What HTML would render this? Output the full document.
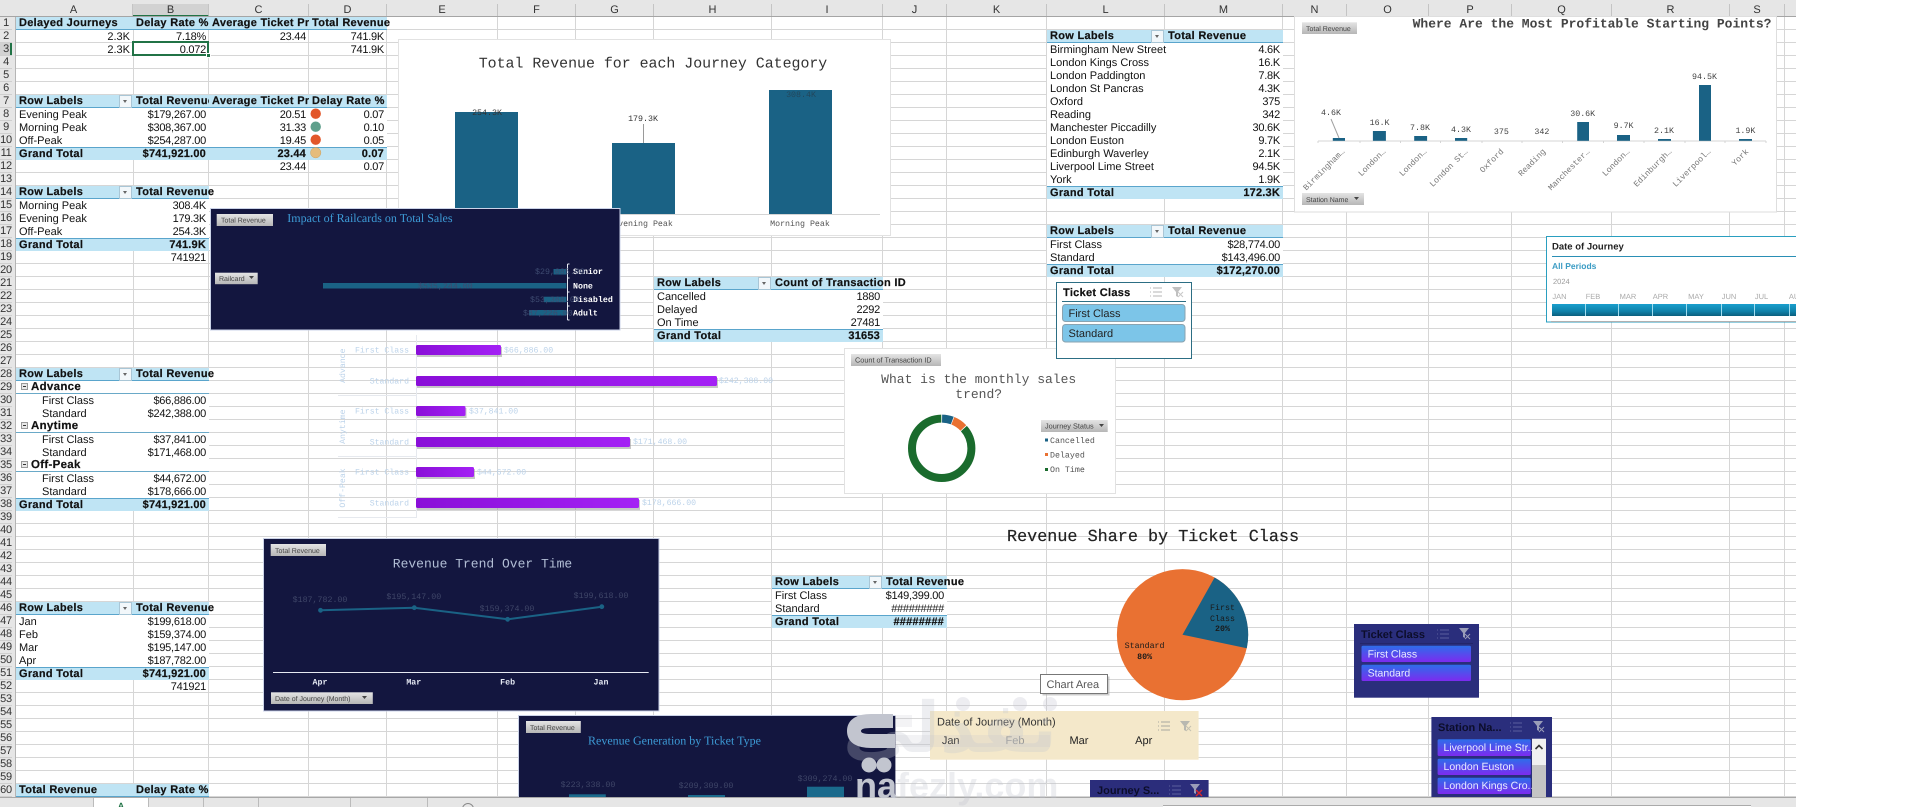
<!DOCTYPE html>
<html><head><meta charset="utf-8"><title>Dashboard</title>
<style>
html,body{margin:0;padding:0;background:#fff}
body{width:1906px;height:807px;position:relative;overflow:hidden;font-family:"Liberation Sans",sans-serif;text-rendering:geometricPrecision}
.abs{position:absolute}
.ch{position:absolute;top:0;left:0;height:17px;width:1796px;background:#e6e6e6;box-sizing:border-box}
.ch i{position:absolute;top:4px;height:13px;font:normal 11px/13px "Liberation Sans",sans-serif;color:#333;text-align:center;border-right:1px solid #c4c4c4;box-sizing:border-box}
.ch:after{content:"";position:absolute;left:0;right:0;top:16px;height:1px;background:#a5a5a5}
.rh{position:absolute;left:0;top:17px;width:15px;height:780px;background:#e6e6e6;border-right:1px solid #b5b5b5;overflow:hidden}
.rh b{display:block;height:13px;box-sizing:border-box;border-bottom:1px solid #cfcfcf;font:normal 11px/13px "Liberation Sans",sans-serif;color:#333;text-align:center;width:15px;margin-left:-3px;padding-left:3px;letter-spacing:-.3px}
.p{position:absolute;font:11px/13px "Liberation Sans",sans-serif;color:#111}
.r{height:13px;display:flex;white-space:nowrap;box-sizing:border-box;line-height:14px}
.w{background:#fff}
.r span{display:block;box-sizing:border-box;overflow:hidden;text-align:right;padding-right:3px;letter-spacing:-.25px;position:relative}
.r span:first-child{text-align:left;padding-left:3px;letter-spacing:0;overflow:visible}
.h,.g{background:#bfe4f4;font-weight:bold;-webkit-text-stroke:.2px #111}
.h{border-bottom:1px solid #5aa5cc;line-height:13px}
.g{border-top:1px solid #5aa5cc;line-height:12px}
.h span,.g span:first-child{letter-spacing:.3px!important}
.h span{text-align:left;padding-left:3px;padding-right:0}
.g span{letter-spacing:.2px}
.ov span:last-child{overflow:visible}
.sub{border-bottom:1px solid #6aa9c8;font-weight:bold;font-size:11.5px;line-height:13px;-webkit-text-stroke:.2px #111}
.sub span:first-child{padding-left:15px!important;letter-spacing:.3px}
.sub em{position:absolute;left:5px;top:2px;width:5px;height:5px;border:1px solid #999;background:#e8e8e8}
.sub em:after{content:"";position:absolute;left:1px;top:2px;width:3px;height:1px;background:#333}
.in span:first-child{padding-left:26px}
.dd{position:absolute;right:1px;top:0;width:11px;height:11px;background:#f2f7fa;border:1px solid #a9c6d6}
.dd:after{content:"";position:absolute;left:3px;top:4px;border:2.5px solid transparent;border-top:3px solid #666;border-bottom:0}
svg{position:absolute;left:0;top:0}
.m{font-family:"Liberation Mono",monospace}
.s{font-family:"Liberation Serif",serif}
.n{font-family:"Liberation Sans",sans-serif}
</style></head><body>

<svg width="1906" height="807" style="z-index:1">
<defs><pattern id="gr" x="0" y="17" width="10" height="13" patternUnits="userSpaceOnUse"><rect x="0" y="12" width="10" height="1" fill="#d6d6d6"/></pattern></defs>
<rect x="15" y="17" width="1781" height="780" fill="url(#gr)"/>
<path d="M133.5 17V797M208.5 17V797M308.5 17V797M386.5 17V797M497.5 17V797M575.5 17V797M653.5 17V797M771.5 17V797M882.5 17V797M946.5 17V797M1046.5 17V797M1164.5 17V797M1282.5 17V797M1346.5 17V797M1428.5 17V797M1511.5 17V797M1611.5 17V797M1729.5 17V797M1784.5 17V797" stroke="#d6d6d6" stroke-width="1" fill="none"/>
</svg>

<div class="ch" style="z-index:2">
<i style="left:15px;width:118px">A</i><i style="left:133px;width:76px;background:#d2d2d2;height:13px;border-bottom:2px solid #217346">B</i><i style="left:209px;width:100px">C</i><i style="left:309px;width:78px">D</i><i style="left:387px;width:111px">E</i><i style="left:498px;width:78px">F</i><i style="left:576px;width:78px">G</i><i style="left:654px;width:118px">H</i><i style="left:772px;width:111px">I</i><i style="left:883px;width:64px">J</i><i style="left:947px;width:100px">K</i><i style="left:1047px;width:118px">L</i><i style="left:1165px;width:118px">M</i><i style="left:1283px;width:64px">N</i><i style="left:1347px;width:82px">O</i><i style="left:1429px;width:83px">P</i><i style="left:1512px;width:100px">Q</i><i style="left:1612px;width:118px">R</i><i style="left:1730px;width:55px">S</i>
</div>
<div class="rh" style="z-index:2"><b>1</b><b>2</b><b style="background:#d2d2d2;box-shadow:inset -2px 0 0 #217346">3</b><b>4</b><b>5</b><b>6</b><b>7</b><b>8</b><b>9</b><b>10</b><b>11</b><b>12</b><b>13</b><b>14</b><b>15</b><b>16</b><b>17</b><b>18</b><b>19</b><b>20</b><b>21</b><b>22</b><b>23</b><b>24</b><b>25</b><b>26</b><b>27</b><b>28</b><b>29</b><b>30</b><b>31</b><b>32</b><b>33</b><b>34</b><b>35</b><b>36</b><b>37</b><b>38</b><b>39</b><b>40</b><b>41</b><b>42</b><b>43</b><b>44</b><b>45</b><b>46</b><b>47</b><b>48</b><b>49</b><b>50</b><b>51</b><b>52</b><b>53</b><b>54</b><b>55</b><b>56</b><b>57</b><b>58</b><b>59</b><b>60</b></div>

<div style="position:absolute;inset:0;z-index:3">

<!-- row 1-3 -->
<div class="p" style="left:16px;top:17px">
<div class="r h ov"><span style="width:117px">Delayed Journeys</span><span style="width:76px">Delay Rate %</span><span style="width:100px">Average Ticket Pri</span><span style="width:78px">Total Revenue</span></div>
<div class="r"><span style="width:117px;text-align:right">2.3K</span><span style="width:76px">7.18%</span><span style="width:100px">23.44</span><span style="width:78px">741.9K</span></div>
<div class="r"><span style="width:117px;text-align:right">2.3K</span><span style="width:76px">0.072</span><span style="width:100px"></span><span style="width:78px">741.9K</span></div>
</div>
<div class="abs" style="left:132px;top:41px;width:77px;height:15px;border:2px solid #217346;box-sizing:border-box"></div>
<div class="abs" style="left:206px;top:53px;width:5px;height:5px;background:#217346;border:1px solid #fff;box-sizing:border-box"></div>

<!-- row 7-12 -->
<div class="p" style="left:16px;top:95px">
<div class="r h"><span style="width:117px">Row Labels<em class="dd"></em></span><span style="width:76px">Total Revenue</span><span style="width:100px">Average Ticket Pri</span><span style="width:78px">Delay Rate %</span></div>
<div class="r w"><span style="width:117px">Evening Peak</span><span style="width:76px">$179,267.00</span><span style="width:100px">20.51</span><span style="width:78px">0.07</span></div>
<div class="r w"><span style="width:117px">Morning Peak</span><span style="width:76px">$308,367.00</span><span style="width:100px">31.33</span><span style="width:78px">0.10</span></div>
<div class="r w"><span style="width:117px">Off-Peak</span><span style="width:76px">$254,287.00</span><span style="width:100px">19.45</span><span style="width:78px">0.05</span></div>
<div class="r g"><span style="width:117px">Grand Total</span><span style="width:76px">$741,921.00</span><span style="width:100px">23.44</span><span style="width:78px">0.07</span></div>
<div class="r"><span style="width:117px"></span><span style="width:76px"></span><span style="width:100px">23.44</span><span style="width:78px">0.07</span></div>
</div>

<!-- row 14-19 -->
<div class="p" style="left:16px;top:186px">
<div class="r h ov"><span style="width:117px">Row Labels<em class="dd"></em></span><span style="width:76px">Total Revenue</span></div>
<div class="r w"><span style="width:117px">Morning Peak</span><span style="width:76px">308.4K</span></div>
<div class="r w"><span style="width:117px">Evening Peak</span><span style="width:76px">179.3K</span></div>
<div class="r w"><span style="width:117px">Off-Peak</span><span style="width:76px">254.3K</span></div>
<div class="r g"><span style="width:117px">Grand Total</span><span style="width:76px">741.9K</span></div>
<div class="r"><span style="width:117px"></span><span style="width:76px">741921</span></div>
</div>

<!-- row 28-38 -->
<div class="p" style="left:16px;top:368px">
<div class="r h ov"><span style="width:117px">Row Labels<em class="dd"></em></span><span style="width:76px">Total Revenue</span></div>
<div class="r w sub"><span style="width:117px"><em></em>Advance</span><span style="width:76px"></span></div>
<div class="r w in"><span style="width:117px">First Class</span><span style="width:76px">$66,886.00</span></div>
<div class="r w in"><span style="width:117px">Standard</span><span style="width:76px">$242,388.00</span></div>
<div class="r w sub"><span style="width:117px"><em></em>Anytime</span><span style="width:76px"></span></div>
<div class="r w in"><span style="width:117px">First Class</span><span style="width:76px">$37,841.00</span></div>
<div class="r w in"><span style="width:117px">Standard</span><span style="width:76px">$171,468.00</span></div>
<div class="r w sub"><span style="width:117px"><em></em>Off-Peak</span><span style="width:76px"></span></div>
<div class="r w in"><span style="width:117px">First Class</span><span style="width:76px">$44,672.00</span></div>
<div class="r w in"><span style="width:117px">Standard</span><span style="width:76px">$178,666.00</span></div>
<div class="r g"><span style="width:117px">Grand Total</span><span style="width:76px">$741,921.00</span></div>
</div>

<!-- row 46-52 -->
<div class="p" style="left:16px;top:602px">
<div class="r h ov"><span style="width:117px">Row Labels<em class="dd"></em></span><span style="width:76px">Total Revenue</span></div>
<div class="r w"><span style="width:117px">Jan</span><span style="width:76px">$199,618.00</span></div>
<div class="r w"><span style="width:117px">Feb</span><span style="width:76px">$159,374.00</span></div>
<div class="r w"><span style="width:117px">Mar</span><span style="width:76px">$195,147.00</span></div>
<div class="r w"><span style="width:117px">Apr</span><span style="width:76px">$187,782.00</span></div>
<div class="r g"><span style="width:117px">Grand Total</span><span style="width:76px">$741,921.00</span></div>
<div class="r"><span style="width:117px"></span><span style="width:76px">741921</span></div>
</div>

<!-- row 60 -->
<div class="p" style="left:16px;top:784px">
<div class="r h"><span style="width:117px">Total Revenue</span><span style="width:76px">Delay Rate %</span></div>
</div>

<!-- H21 -->
<div class="p" style="left:654px;top:277px">
<div class="r h ov"><span style="width:118px">Row Labels<em class="dd"></em></span><span style="width:111px">Count of Transaction ID</span></div>
<div class="r w"><span style="width:118px">Cancelled</span><span style="width:111px">1880</span></div>
<div class="r w"><span style="width:118px">Delayed</span><span style="width:111px">2292</span></div>
<div class="r w"><span style="width:118px">On Time</span><span style="width:111px">27481</span></div>
<div class="r g"><span style="width:118px">Grand Total</span><span style="width:111px">31653</span></div>
</div>

<!-- L2 -->
<div class="p" style="left:1047px;top:30px">
<div class="r h"><span style="width:118px">Row Labels<em class="dd"></em></span><span style="width:118px">Total Revenue</span></div>
<div class="r w"><span style="width:118px">Birmingham New Street</span><span style="width:118px">4.6K</span></div>
<div class="r w"><span style="width:118px">London Kings Cross</span><span style="width:118px">16.K</span></div>
<div class="r w"><span style="width:118px">London Paddington</span><span style="width:118px">7.8K</span></div>
<div class="r w"><span style="width:118px">London St Pancras</span><span style="width:118px">4.3K</span></div>
<div class="r w"><span style="width:118px">Oxford</span><span style="width:118px">375</span></div>
<div class="r w"><span style="width:118px">Reading</span><span style="width:118px">342</span></div>
<div class="r w"><span style="width:118px">Manchester Piccadilly</span><span style="width:118px">30.6K</span></div>
<div class="r w"><span style="width:118px">London Euston</span><span style="width:118px">9.7K</span></div>
<div class="r w"><span style="width:118px">Edinburgh Waverley</span><span style="width:118px">2.1K</span></div>
<div class="r w"><span style="width:118px">Liverpool Lime Street</span><span style="width:118px">94.5K</span></div>
<div class="r w"><span style="width:118px">York</span><span style="width:118px">1.9K</span></div>
<div class="r g"><span style="width:118px">Grand Total</span><span style="width:118px">172.3K</span></div>
</div>

<!-- L17 -->
<div class="p" style="left:1047px;top:225px">
<div class="r h"><span style="width:118px">Row Labels<em class="dd"></em></span><span style="width:118px">Total Revenue</span></div>
<div class="r w"><span style="width:118px">First Class</span><span style="width:118px">$28,774.00</span></div>
<div class="r w"><span style="width:118px">Standard</span><span style="width:118px">$143,496.00</span></div>
<div class="r g"><span style="width:118px">Grand Total</span><span style="width:118px">$172,270.00</span></div>
</div>

<!-- I44 -->
<div class="p" style="left:772px;top:576px">
<div class="r h ov"><span style="width:111px">Row Labels<em class="dd"></em></span><span style="width:64px">Total Revenue</span></div>
<div class="r w"><span style="width:111px">First Class</span><span style="width:64px">$149,399.00</span></div>
<div class="r w"><span style="width:111px">Standard</span><span style="width:64px">#########</span></div>
<div class="r g"><span style="width:111px">Grand Total</span><span style="width:64px">########</span></div>
</div>
</div>

<svg width="1906" height="807" style="z-index:4">
<defs>
<linearGradient id="btn" x1="0" y1="0" x2="0" y2="1"><stop offset="0" stop-color="#e4e4e4"/><stop offset="1" stop-color="#b6b6b6"/></linearGradient>
<linearGradient id="pur" x1="0" y1="0" x2="1" y2="0"><stop offset="0" stop-color="#8a0fd8"/><stop offset="1" stop-color="#a421f5"/></linearGradient>
<linearGradient id="sl" x1="0" y1="0" x2="0" y2="1"><stop offset="0" stop-color="#2d6eea"/><stop offset="1" stop-color="#7c2bef"/></linearGradient>
<linearGradient id="tl" x1="0" y1="0" x2="0" y2="1"><stop offset="0" stop-color="#1a9fce"/><stop offset=".6" stop-color="#0f82aa"/><stop offset="1" stop-color="#0b5f7e"/></linearGradient>
<clipPath id="tlclip"><rect x="1540" y="230" width="256" height="100"/></clipPath>
</defs>

<!-- icons in pivot -->
<circle cx="315.7" cy="113.7" r="5.2" fill="#e2572a"/><circle cx="315.7" cy="126.7" r="5.2" fill="#5fa08c"/><circle cx="315.7" cy="139.7" r="5.2" fill="#e2572a"/><circle cx="315.7" cy="152.7" r="5.2" fill="#e5bc7c" stroke="#c9a060" stroke-width=".5"/>

<!-- Chart 1 -->
<rect x="398.5" y="39.5" width="492" height="196" fill="#fff" stroke="#e2e2e2"/>
<text class="m" x="653" y="67.5" font-size="14.9" fill="#333" text-anchor="middle">Total Revenue for each Journey Category</text>
<path d="M420 214.5H880" stroke="#d4d4d4"/>
<rect x="455" y="112" width="63" height="102" fill="#1a6285"/><rect x="612" y="143" width="63" height="71" fill="#1a6285"/><rect x="769" y="90" width="63" height="124" fill="#1a6285"/>
<g class="m" font-size="8.3" text-anchor="middle" fill="#333">
<text x="487" y="115">254.3K</text><text x="643" y="121">179.3K</text><text x="801" y="97" fill="#23475c">308.4K</text>
<text x="487" y="226" fill="#555">Off-Peak</text><text x="643" y="226" fill="#555">Evening Peak</text><text x="800" y="226" fill="#555">Morning Peak</text></g>
<path d="M643.5 124V143" stroke="#9a9a9a"/>

<!-- Railcard chart -->
<rect x="210.5" y="208.5" width="409.5" height="121.5" fill="#13163f" stroke="#cbd3e8"/>
<rect x="216.7" y="214" width="56.3" height="12" fill="url(#btn)"/><text class="n" x="221" y="222.6" font-size="7" fill="#444">Total Revenue</text>
<text class="s" x="287.3" y="222" font-size="12" fill="#3d9bd6">Impact of Railcards on Total Sales</text>
<rect x="215" y="272.7" width="42.7" height="11.5" fill="url(#btn)"/><text class="n" x="219" y="281" font-size="7" fill="#444">Railcard</text><path d="M249 276h5l-2.5 3z" fill="#444"/>
<g fill="#1a6285"><rect x="553.5" y="269" width="13" height="5.5"/><rect x="323" y="283" width="243.4" height="5.5"/><rect x="544" y="296.7" width="22.4" height="5.5"/><rect x="529" y="310" width="37.4" height="5.5"/></g>
<path d="M567.5 264V320M567.5 264h2M567.5 278h2M567.5 292h2M567.5 306h2M567.5 320h2" stroke="#e6e9f2" fill="none"/>
<g class="m" font-size="8.3" fill="#fff" font-weight="bold"><text x="573" y="274">Senior</text><text x="573" y="288.5">None</text><text x="573" y="302">Disabled</text><text x="573" y="315.5">Adult</text></g>
<g class="m" font-size="8.3" fill="#3d4a70"><text x="535" y="274">$29,085.00</text><text x="418" y="288.5">$535,244.00</text><text x="530" y="302">$53,368.00</text><text x="523" y="315.5">$87,226.00</text></g>

<!-- Purple chart -->
<path d="M416.5 335V518M338 395.5H416M338 456.5H416M338 517.5H416" stroke="#e6e9ee" fill="none"/>
<g fill="#999" opacity=".55"><rect x="417" y="347" width="85" height="10"/><rect x="417" y="378" width="301" height="10"/><rect x="417" y="408" width="49.5" height="10"/><rect x="417" y="439" width="214" height="10"/><rect x="417" y="469" width="58" height="10"/><rect x="417" y="500" width="223" height="10"/></g>
<g fill="url(#pur)"><rect x="416" y="345" width="85" height="10" rx="1.5"/><rect x="416" y="376" width="301" height="10" rx="1.5"/><rect x="416" y="406" width="49.5" height="10" rx="1.5"/><rect x="416" y="437" width="214" height="10" rx="1.5"/><rect x="416" y="467" width="58" height="10" rx="1.5"/><rect x="416" y="498" width="223" height="10" rx="1.5"/></g>
<g class="m" font-size="8.2" fill="#bcd3ea">
<g text-anchor="end"><text x="409" y="352.5">First Class</text><text x="409" y="383.5">Standard</text><text x="409" y="413.5">First Class</text><text x="409" y="444.5">Standard</text><text x="409" y="474.5">First Class</text><text x="409" y="505.5">Standard</text></g>
<text x="504" y="352.5">$66,886.00</text><text x="719" y="383">$242,388.00</text><text x="469" y="413.5">$37,841.00</text><text x="633" y="444">$171,468.00</text><text x="477" y="474.5">$44,672.00</text><text x="642" y="505">$178,666.00</text>
<g text-anchor="middle"><text transform="translate(345,365.7) rotate(-90)">Advance</text><text transform="translate(345,426.7) rotate(-90)">Anytime</text><text transform="translate(345,488) rotate(-90)">Off-Peak</text></g></g>

<!-- Donut -->
<rect x="844.5" y="348.5" width="271" height="145" fill="#fff" stroke="#e2e2e2"/>
<rect x="851" y="354" width="90" height="12" fill="url(#btn)"/><text class="n" x="855" y="362.6" font-size="7.3" fill="#444">Count of Transaction ID</text>
<g class="m" font-size="13" fill="#555" text-anchor="middle"><text x="978.7" y="383">What is the monthly sales</text><text x="978.7" y="398">trend?</text></g>
<g transform="rotate(-90 941.7 448.3)" fill="none" stroke-width="8">
<circle cx="941.7" cy="448.3" r="29.7" stroke="#1a6b2d" stroke-dasharray="160.9 25.7" stroke-dashoffset="-25"/>
<circle cx="941.7" cy="448.3" r="29.7" stroke="#1a6285" stroke-dasharray="10.4 176.2" stroke-dashoffset="-.4"/>
<circle cx="941.7" cy="448.3" r="29.7" stroke="#e97132" stroke-dasharray="12.8 173.8" stroke-dashoffset="-11.4"/></g>
<rect x="1041" y="420" width="66.7" height="12" fill="url(#btn)"/><text class="n" x="1045" y="428.6" font-size="7.3" fill="#444">Journey Status</text><path d="M1099 424h5l-2.5 3z" fill="#444"/>
<rect x="1045" y="438.5" width="3" height="3" fill="#1a6285"/><rect x="1045" y="453" width="3" height="3" fill="#e97132"/><rect x="1045" y="468" width="3" height="3" fill="#1a6b2d"/>
<g class="m" font-size="8.3" fill="#555"><text x="1050" y="443">Cancelled</text><text x="1050" y="457.5">Delayed</text><text x="1050" y="472">On Time</text></g>

<!-- Ticket class slicer -->
<rect x="1056.5" y="282.5" width="135" height="76" fill="#fff" stroke="#2c6e84"/>
<text class="n" x="1063" y="296" font-size="11" font-weight="bold" letter-spacing=".3" fill="#111" stroke="#111" stroke-width=".2">Ticket Class</text>
<path d="M1062 301.5H1186" stroke="#2c6e84"/>
<path d="M1153 288h9M1153 292h9M1153 296h9M1150 288h1M1150 292h1M1150 296h1" stroke="#b5b5b5"/>
<path d="M1172 287h10l-4 5v5l-2-1v-4z" fill="#c0c0c0"/><path d="M1178 292l5 5M1183 292l-5 5" stroke="#c8c8c8"/>
<rect x="1062.5" y="304.5" width="122.5" height="17" rx="3" fill="#7cc5e8" stroke="#8aa3b0"/><rect x="1062.5" y="324.5" width="122.5" height="17.5" rx="3" fill="#7cc5e8" stroke="#8aa3b0"/>
<g class="n" font-size="11" fill="#222"><text x="1068.5" y="317">First Class</text><text x="1068.5" y="337">Standard</text></g>

<!-- Where chart -->
<rect x="1294.5" y="16.5" width="482" height="195.5" fill="#fff" stroke="#dedede"/>
<text class="m" x="1412.6" y="27.5" font-size="13" font-weight="bold" fill="#444">Where Are the Most Profitable Starting Points?</text>
<rect x="1302" y="22.3" width="55" height="11.7" fill="url(#btn)"/><text class="n" x="1306" y="31" font-size="7" fill="#444">Total Revenue</text>
<path d="M1318 141H1766M1318 141v2M1360 141v2M1400.500 141v2M1440.500 141v2M1482 141v2M1522 141v2M1562.500 141v2M1603.500 141v2M1644 141v2M1685 141v2M1725 141v2M1766 141v2" stroke="#d4d4d4" fill="none"/>
<g fill="#1a6285"><rect x="1332.800" y="138" width="12.200" height="2.800"/><rect x="1372.900" y="131" width="13" height="9.800"/><rect x="1414.200" y="136" width="12.900" height="4.800"/><rect x="1455" y="138" width="12.200" height="2.800"/><rect x="1577.200" y="122" width="11.800" height="18.800"/><rect x="1617" y="135" width="13" height="5.800"/><rect x="1658" y="139" width="13" height="1.800"/><rect x="1699" y="85" width="12" height="55.800"/><rect x="1739" y="139" width="13" height="1.800"/></g>
<path d="M1331 119L1339 138" stroke="#a0a0a0"/>
<g class="m" font-size="8.3" fill="#444" text-anchor="middle"><text x="1331" y="115">4.6K</text><text x="1379.600" y="125">16.K</text><text x="1420" y="130">7.8K</text><text x="1461" y="132">4.3K</text><text x="1501.400" y="134">375</text><text x="1541.900" y="134">342</text><text x="1582.700" y="116">30.6K</text><text x="1623.600" y="128">9.7K</text><text x="1664" y="133">2.1K</text><text x="1704.500" y="79">94.5K</text><text x="1745.400" y="133">1.9K</text></g>
<g class="m" font-size="8.3" fill="#777" text-anchor="end"><text transform="translate(1345,152) rotate(-45)">Birmingham…</text><text transform="translate(1386,152) rotate(-45)">London…</text><text transform="translate(1427,152) rotate(-45)">London…</text><text transform="translate(1468,152) rotate(-45)">London St…</text><text transform="translate(1504,152) rotate(-45)">Oxford</text><text transform="translate(1546,152) rotate(-45)">Reading</text><text transform="translate(1590,152) rotate(-45)">Manchester…</text><text transform="translate(1630,152) rotate(-45)">London…</text><text transform="translate(1672,152) rotate(-45)">Edinburgh…</text><text transform="translate(1711,152) rotate(-45)">Liverpool…</text><text transform="translate(1749,152) rotate(-45)">York</text></g>
<rect x="1302" y="193" width="62" height="12" fill="url(#btn)"/><text class="n" x="1306" y="201.800" font-size="7" fill="#444">Station Name</text><path d="M1354 197h5l-2.500 3z" fill="#444"/>

<!-- Timeline -->
<g clip-path="url(#tlclip)">
<rect x="1546.500" y="236.500" width="260" height="85.500" fill="#fff" stroke="#2a9fc0"/>
<path d="M1551 321.500H1800" stroke="#b0b0b0"/>
<text class="n" x="1552" y="249.500" font-size="9.500" font-weight="bold" fill="#222">Date of Journey</text>
<path d="M1552 256.500H1800" stroke="#2a8fb5"/>
<text class="n" x="1552" y="269" font-size="8.500" font-weight="bold" fill="#3b9cc4">All Periods</text>
<text class="n" x="1553" y="284" font-size="7.500" fill="#999">2024</text>
<g class="n" font-size="7.500" fill="#aaa" text-anchor="middle"><text x="1559.500" y="299">JAN</text><text x="1593" y="299">FEB</text><text x="1628" y="299">MAR</text><text x="1660.500" y="299">APR</text><text x="1696" y="299">MAY</text><text x="1729" y="299">JUN</text><text x="1761.500" y="299">JUL</text><text x="1797" y="299">AUG</text></g>
<rect x="1552" y="304" width="250" height="12" fill="url(#tl)"/>
<path d="M1585.500 304v12M1618.500 304v12M1652.500 304v12M1686.500 304v12M1721.500 304v12M1754.500 304v12M1789.500 304v12" stroke="#9fdcef"/>
</g>

<!-- Trend -->
<rect x="263.500" y="538.500" width="395.500" height="172.500" fill="#13163f" stroke="#cbd3e8"/>
<rect x="270.700" y="544" width="55.300" height="12" fill="url(#btn)"/><text class="n" x="275" y="552.800" font-size="7" fill="#444">Total Revenue</text>
<text class="m" x="482.500" y="567.500" font-size="13" fill="#b3bfd6" text-anchor="middle">Revenue Trend Over Time</text>
<path d="M320.500 610.300L414.300 607.700L507.600 619.300L601.800 606.700" stroke="#1a6285" stroke-width="2" fill="none"/>
<g fill="#1a6285"><circle cx="320.500" cy="610.300" r="2.400"/><circle cx="414.300" cy="607.700" r="2.400"/><circle cx="507.600" cy="619.300" r="2.400"/><circle cx="601.800" cy="606.700" r="2.400"/></g>
<g class="m" font-size="8.300" fill="#3f4668" text-anchor="middle"><text x="320" y="602">$187,782.00</text><text x="413.800" y="599">$195,147.00</text><text x="507" y="611">$159,374.00</text><text x="601" y="598">$199,618.00</text></g>
<path d="M273 672.500H648.700" stroke="#e6e9f2"/>
<g class="m" font-size="8.300" font-weight="bold" fill="#e4e8f2" text-anchor="middle"><text x="320" y="684.300">Apr</text><text x="413.800" y="684.300">Mar</text><text x="507.600" y="684.300">Feb</text><text x="601" y="684.300">Jan</text></g>
<rect x="271" y="692.300" width="101.800" height="11.700" fill="url(#btn)"/><text class="n" x="275" y="701" font-size="7" fill="#444">Date of Journey (Month)</text><path d="M362 696h5l-2.500 3z" fill="#444"/>

<!-- Generation -->
<rect x="518.800" y="715.700" width="376.600" height="82.300" fill="#13163f"/>
<path d="M518.500 798V715.500H895" stroke="#cbd3e8" fill="none"/>
<rect x="526" y="721" width="54.800" height="12" fill="url(#btn)"/><text class="n" x="530" y="729.800" font-size="7" fill="#444">Total Revenue</text>
<text class="s" x="588" y="744.500" font-size="12" fill="#3d9bd6">Revenue Generation by Ticket Type</text>
<g class="m" font-size="8.300" fill="#3f4668" text-anchor="middle"><text x="588" y="787">$223,338.00</text><text x="706" y="788">$209,309.00</text><text x="825" y="781">$309,274.00</text></g>
<g fill="#1a6a8c"><rect x="569" y="794.300" width="36.800" height="3.700"/><rect x="688" y="795" width="37" height="3"/><rect x="807" y="786.700" width="37" height="11.300"/></g>

<!-- Revenue share -->
<text class="m" x="1007" y="541" font-size="16.800" fill="#222" stroke="#222" stroke-width=".2">Revenue Share by Ticket Class</text>
<circle cx="1182.500" cy="634.700" r="65.600" fill="#e97132"/>
<path d="M1182.500 634.700L1214.600 577.500A65.600 65.600 0 0 1 1246.800 648.300Z" fill="#1a6285"/>
<g class="m" font-size="8.300" fill="#1a1a1a" text-anchor="middle"><text x="1222.500" y="610">First</text><text x="1222.500" y="621">Class</text><text x="1222.500" y="631" font-weight="bold">20%</text><text x="1144.600" y="648">Standard</text><text x="1144.600" y="659" font-weight="bold">80%</text></g>
<rect x="1042.500" y="676.500" width="67" height="19" fill="#aaa" opacity=".6"/>
<rect x="1040.500" y="674.500" width="67" height="19" fill="#fff" stroke="#777"/>
<text class="n" x="1046.500" y="688" font-size="11" fill="#555">Chart Area</text>

<!-- Month slicer -->
<rect x="930" y="711" width="268.600" height="48.700" fill="#f4e8ca"/>
<text class="n" x="937" y="725.500" font-size="11" fill="#333">Date of Journey (Month)</text>
<path d="M1161 722h9M1161 726h9M1161 730h9M1158 722h1M1158 726h1M1158 730h1" stroke="#a8a8a0"/>
<path d="M1180 721h10l-4 5v5l-2-1v-4z" fill="#b8b8b0"/><path d="M1186 726l5 5M1191 726l-5 5" stroke="#c4c0b0"/>
<g class="n" font-size="11" fill="#222" text-anchor="middle"><text x="950.700" y="744">Jan</text><text x="1015" y="744" fill="#8e8e88">Feb</text><text x="1079" y="744">Mar</text><text x="1143.700" y="744">Apr</text></g>

<!-- dark ticket slicer -->
<rect x="1354" y="624" width="125" height="73.700" fill="#2a2e7c"/>
<text class="n" x="1361" y="638" font-size="11" font-weight="bold" fill="#0c0d2a">Ticket Class</text>
<path d="M1360 643.500H1473" stroke="#23266a"/>
<path d="M1440 630h9M1440 634h9M1440 638h9M1437 630h1M1437 634h1M1437 638h1" stroke="#5b5f9e"/>
<path d="M1459 628h10l-4 5v5l-2-1v-4z" fill="#9a9db8"/><path d="M1465 634l5 5M1470 634l-5 5" stroke="#9a9db8"/>
<rect x="1361.500" y="645.700" width="109.500" height="16.300" rx="1.500" fill="url(#sl)"/><rect x="1361.500" y="664.700" width="109.500" height="16.300" rx="1.500" fill="url(#sl)"/>
<g class="n" font-size="10.500" fill="#e8ecff"><text x="1367.600" y="657.500">First Class</text><text x="1367.600" y="676.500">Standard</text></g>

<!-- station slicer -->
<rect x="1431.400" y="717" width="120.600" height="81" fill="#2a2e7c"/>
<text class="n" x="1438" y="731" font-size="11" font-weight="bold" fill="#0c0d2a">Station Na...</text>
<path d="M1513 723h9M1513 727h9M1513 731h9M1510 723h1M1510 727h1M1510 731h1" stroke="#5b5f9e"/>
<path d="M1533 721h10l-4 5v5l-2-1v-4z" fill="#9a9db8"/><path d="M1539 727l5 5M1544 727l-5 5" stroke="#9a9db8"/>
<rect x="1437.600" y="739.300" width="93.200" height="16.700" rx="1.500" fill="url(#sl)"/><rect x="1437.600" y="758.700" width="93.200" height="16.300" rx="1.500" fill="url(#sl)"/><rect x="1437.600" y="777.700" width="93.200" height="16.300" rx="1.500" fill="url(#sl)"/><rect x="1437.600" y="797" width="93.200" height="3" fill="#2d6eea"/>
<g class="n" font-size="10.500" fill="#e8ecff"><text x="1443.500" y="751">Liverpool Lime Str...</text><text x="1443.500" y="770">London Euston</text><text x="1443.500" y="789">London Kings Cro...</text></g>
<rect x="1532" y="738.700" width="14" height="59.300" fill="#f0f0f0"/><rect x="1532" y="765" width="14" height="33" fill="#c4c4c4"/>
<path d="M1535.500 749l3.500-3.500 3.500 3.500" stroke="#333" stroke-width="1.600" fill="none"/>

<!-- Journey slicer -->
<rect x="1090" y="780" width="118.600" height="18" fill="#2b2d7b"/>
<text class="n" x="1097" y="794" font-size="11" font-weight="bold" fill="#0c0d2a">Journey S...</text>
<path d="M1172 786h9M1172 790h9M1172 794h9M1169 786h1M1169 790h1M1169 794h1" stroke="#5b5f9e"/>
<path d="M1190 784h10l-4 5v5l-2-1v-4z" fill="#9a9db8"/><path d="M1196 790l6 6M1202 790l-6 6" stroke="#d8262c" stroke-width="1.400"/>
</svg>

<!-- Sheet tabs -->
<div class="abs" style="left:0;top:797px;width:1796px;height:10px;background:#e6e6e6;border-top:1px solid #a8a8a8;box-sizing:border-box;z-index:5;overflow:hidden">
<div class="abs" style="left:93px;top:-1px;width:56px;height:11px;background:#fff;border-left:1px solid #bbb;border-right:1px solid #bbb;box-sizing:border-box;font:bold 9px/18px 'Liberation Sans',sans-serif;color:#217346;text-align:center">A</div>
<div class="abs" style="left:203px;top:0;width:1px;height:10px;background:#bbb"></div>
<div class="abs" style="left:258px;top:0;width:1px;height:10px;background:#bbb"></div>
<div class="abs" style="left:350px;top:0;width:1px;height:10px;background:#bbb"></div>
<div class="abs" style="left:427px;top:0;width:1px;height:10px;background:#bbb"></div>
<div class="abs" style="left:462px;top:5px;width:12px;height:12px;border:1px solid #888;border-radius:50%;box-sizing:border-box"></div>
<div class="abs" style="left:1163px;top:7px;width:588px;height:3px;background:#fff;border-top:1px solid #aaa;box-sizing:border-box"></div>
</div>

<!-- Watermark -->
<svg width="1906" height="807" style="z-index:6">
<defs><clipPath id="darkclip"><rect x="518" y="690" width="377.4" height="108"/></clipPath></defs>
<text x="950" y="752" font-family="'DejaVu Sans',sans-serif" font-weight="bold" font-size="70" fill="#c2c5cf" opacity=".28" text-anchor="middle" direction="rtl">نفذلي</text>
<path d="M893 721H871Q854 721 854 731Q854 741 871 741H895" stroke="#c2c5cf" stroke-width="14" fill="none" stroke-linecap="butt"/>
<path d="M895 721H912M895 741H1050" stroke="#c2c5cf" stroke-width="12" fill="none" opacity=".2"/>
<circle cx="869" cy="765" r="7.500" fill="#c2c5cf"/><circle cx="884" cy="765" r="7.500" fill="#c2c5cf"/>
<circle cx="963" cy="704" r="7" fill="#c2c5cf" opacity=".3"/><circle cx="1020" cy="704" r="7" fill="#c2c5cf" opacity=".3"/><circle cx="1050" cy="704" r="7" fill="#c2c5cf" opacity=".3"/>
<text x="855" y="798" font-size="36" fill="#c2c5cf" opacity=".3" font-family="'Liberation Sans',sans-serif" font-weight="bold">nafezly.com</text>
<text x="855" y="798" font-size="36" fill="#c2c5cf" font-family="'Liberation Sans',sans-serif" font-weight="bold" clip-path="url(#darkclip)">nafezly.com</text>
</svg>
</body></html>
